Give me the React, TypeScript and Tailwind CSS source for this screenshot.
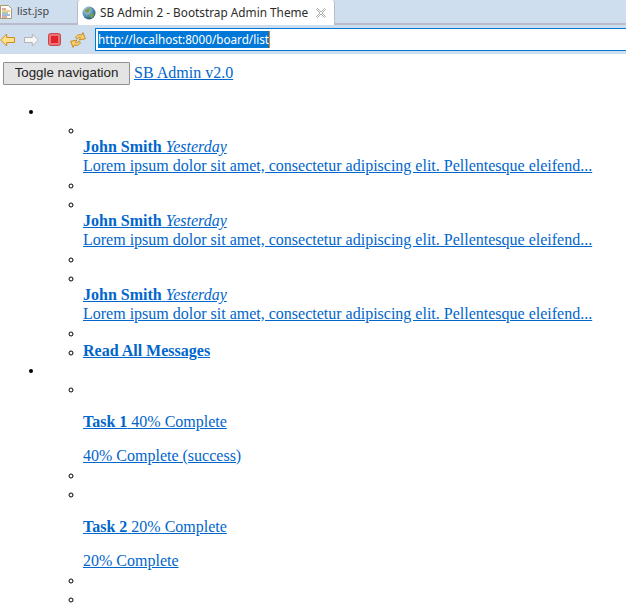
import React from 'react';

const serif = { fontFamily: '"Liberation Serif", serif' };

const messages = [1, 2, 3];

const tasks = [
  { title: 'Task 1', done: '40% Complete', bar: '40% Complete (success)' },
  { title: 'Task 2', done: '20% Complete', bar: '20% Complete' },
];

const FileIcon = () => (
  <svg width="12" height="14" viewBox="0 0 12 14" className="shrink-0">
    <path d="M.5.5h8l3 3v10H.5z" fill="#fff" stroke="#a89a6c" />
    <path d="M2 4h4" stroke="#c94f4f" />
    <path d="M2 6h8" stroke="#e0a030" />
    <path d="M2 8h6" stroke="#4f9a55" />
    <path d="M2 10h8" stroke="#4f6fc9" />
    <path d="M2 12h5" stroke="#c94f4f" />
  </svg>
);

const GlobeIcon = () => (
  <svg width="14" height="14" viewBox="0 0 14 14" className="shrink-0">
    <defs>
      <radialGradient id="globe" cx="35%" cy="30%" r="80%">
        <stop offset="0%" stopColor="#c4deee" />
        <stop offset="60%" stopColor="#4d86a8" />
        <stop offset="100%" stopColor="#1f4d6b" />
      </radialGradient>
    </defs>
    <circle cx="7" cy="7" r="6.500" fill="url(#globe)" />
    <path d="M3 4l3-2 2 1-1 3-2 1-2-1zM8 8l3-1 1 2-2 3-2-1z" fill="#7a9f4e" />
  </svg>
);

const BackIcon = () => (
  <svg width="15" height="14" viewBox="0 0 15 14">
    <path d="M.7 7l6-6v3.500h7.800v5H6.700V13z" fill="#fde28a" stroke="#d08a20" strokeLinejoin="round" />
  </svg>
);

const ForwardIcon = () => (
  <svg width="15" height="14" viewBox="0 0 15 14">
    <path d="M14.300 7l-6-6v3.500H.5v5h7.800V13z" fill="#f6f6f6" stroke="#b4b4b4" strokeLinejoin="round" />
  </svg>
);

const StopIcon = () => (
  <svg width="13" height="13" viewBox="0 0 13 13">
    <rect x="0.500" y="0.500" width="12" height="12" rx="2" fill="#ea7378" stroke="#c9464c" />
    <rect x="3" y="3" width="7" height="7" fill="#e0222b" />
  </svg>
);

const RefreshIcon = () => (
  <svg width="16" height="16" viewBox="1.500 1.500 13 13">
    <path d="M6 6c1-2 3-3 5-2l1-2 2 5-5 1 1-2c-1-.5-2 0-2.500 1z" fill="#f5cf6a" stroke="#c98a2a" strokeWidth="0.800" />
    <path d="M10 10c-1 2-3 3-5 2l-1 2-2-5 5-1-1 2c1 .5 2 0 2.500-1z" fill="#f5cf6a" stroke="#c98a2a" strokeWidth="0.800" />
  </svg>
);

const CloseIcon = () => (
  <svg width="10" height="10" viewBox="0 0 10 10" className="shrink-0">
    <path d="M1.500 0.500L5 4l3.500-3.500 1 1L6 5l3.500 3.500-1 1L5 6 1.500 9.500l-1-1L4 5 .5 1.500z" fill="#fff" stroke="#8a8a8a" strokeWidth="0.700" />
  </svg>
);

const App: React.FC = () => {
  return (
    <div className="h-[613px] w-[626px] overflow-hidden bg-white" style={serif}>
      {/* Browser chrome */}
      <div className="h-[54px] bg-[#cfdeee]" style={{ fontFamily: '"Noto Sans", sans-serif' }}>
        <div className="flex h-[25px] border-b-2 border-[#b9bccb] text-[11.800px] text-[#2b2b2b]">
          <div className="flex w-[77px] items-center gap-[5px]">
            <FileIcon />
            <span className="text-[10.800px] text-[#444]">list.jsp</span>
          </div>
          <div className="-mb-[2px] flex h-[25px] w-[258px] items-center gap-[4px] rounded-t-[3px] border-x border-[#b9bccb] bg-white pl-[4px]">
            <GlobeIcon />
            <span className="whitespace-nowrap">SB Admin 2 - Bootstrap Admin Theme</span>
            <span className="ml-[4px] flex"><CloseIcon /></span>
          </div>
        </div>
        <div className="flex h-[29px] items-center">
          <div className="flex w-[95px] items-center gap-[9px]">
            <BackIcon />
            <ForwardIcon />
            <StopIcon />
            <RefreshIcon />
          </div>
          <div className="flex h-[23px] flex-1 items-center border-y border-l border-[#0078d7] bg-white pl-[2px] text-[11.700px]">
            <span className="whitespace-nowrap bg-[#0078d7] text-white">http://localhost:8000/board/list</span>
            <span className="h-[17px] w-[1px] bg-[#e8820c]" />
          </div>
        </div>
      </div>

      {/* Page */}
      <div className="px-[3px] pt-[8px] text-[16px] leading-[18.500px] text-black">
        <div className="flex h-[23px] items-center">
          <button
            className="h-[23px] w-[127px] rounded-[1px] border border-[#8f8f8f] bg-[#e4e4e4] text-[13.330px] text-[#222]"
            style={{ fontFamily: '"Liberation Sans", sans-serif' }}
          >
            Toggle navigation
          </button>
          <a className="ml-[4px] text-[#0066cc] underline">SB Admin v2.0</a>
        </div>

        <ul className="mt-[16px] list-disc pl-[40px] marker:text-[12.500px]">
          <li>
            <br />
            <ul className="list-[circle] pl-[40px] marker:text-[12.500px]">
              {messages.map((id) => (
                <React.Fragment key={id}>
                  <li>
                    <br />
                    <a className="block text-[#0066cc] underline">
                      <strong>John Smith</strong> <em>Yesterday</em>
                    </a>
                    <a className="block whitespace-nowrap text-[#0066cc] underline">
                      Lorem ipsum dolor sit amet, consectetur adipiscing elit. Pellentesque eleifend...
                    </a>
                  </li>
                  <li className="h-[18.500px]" />
                </React.Fragment>
              ))}
              <li>
                <a className="font-bold text-[#0066cc] underline">Read All Messages</a>
              </li>
            </ul>
          </li>
          <li>
            <br />
            <ul className="list-[circle] pl-[40px] marker:text-[12.500px]">
              {tasks.map((task) => (
                <React.Fragment key={task.title}>
                  <li>
                    <br />
                    <a className="block text-[#0066cc] underline">
                      <p className="mt-[15.500px]">
                        <strong>{task.title}</strong> {task.done}
                      </p>
                      <p className="mt-[15.500px]">{task.bar}</p>
                    </a>
                  </li>
                  <li className="h-[18.500px]" />
                </React.Fragment>
              ))}
              <li className="h-[18.500px]" />
            </ul>
          </li>
        </ul>
      </div>
    </div>
  );
};

export default App;
